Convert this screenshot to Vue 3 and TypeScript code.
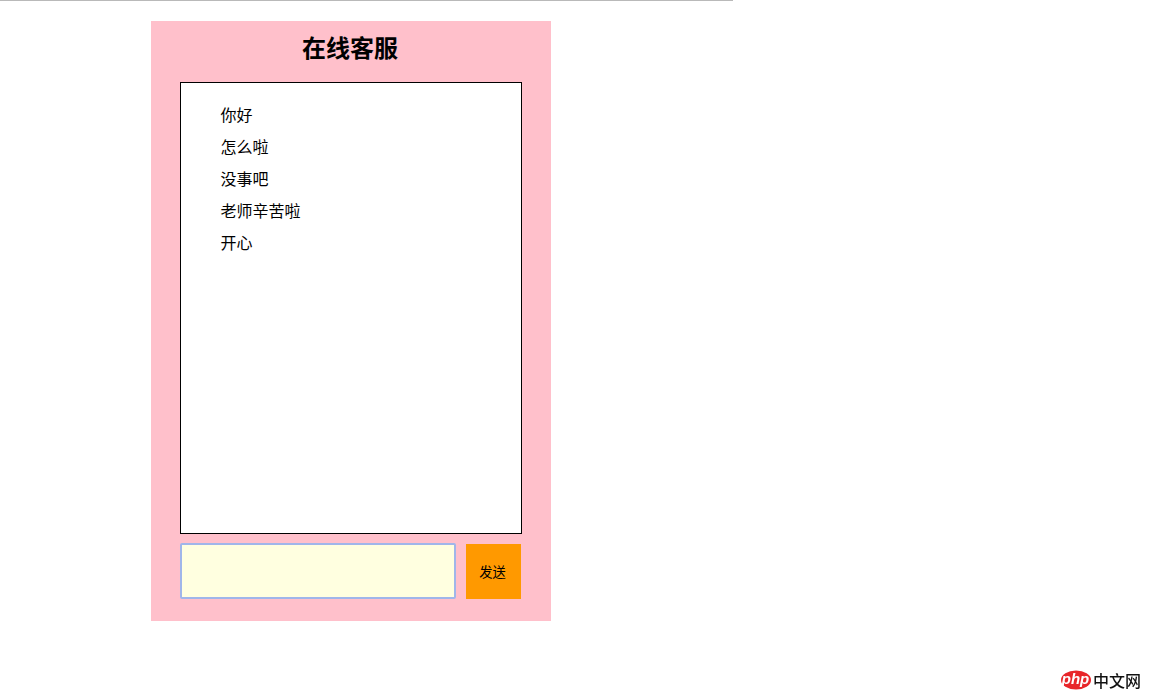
<script setup lang="ts">
const messages: string[] = ['你好', '怎么啦', '没事吧', '老师辛苦啦', '开心']
</script>

<template>
  <div class="page">
    <div class="rule"></div>
    <main class="panel">
      <h2 class="title">在线客服</h2>
      <div class="chat">
        <ul class="list">
          <li v-for="m in messages" :key="m">{{ m }}</li>
        </ul>
      </div>
      <div class="composer">
        <textarea class="field"></textarea>
        <button class="send" type="button">发送</button>
      </div>
    </main>
    <div class="logo">
      <svg class="php" width="30" height="20" viewBox="0 0 30 20">
        <ellipse cx="15" cy="10" rx="15" ry="9.5" fill="#e8262a" />
        <text x="14.5" y="14" text-anchor="middle" class="php-text">php</text>
      </svg>
      <span class="cn">中文网</span>
    </div>
  </div>
</template>

<style scoped>
.page {
  font-family: "Noto Sans CJK SC", "Liberation Sans", sans-serif;
  color: #000;
}
.rule {
  width: 733px;
  height: 1px;
  background: #b9b9b9;
}
.panel {
  box-sizing: border-box;
  width: 400px;
  height: 600px;
  margin: 20px 0 0 151px;
  padding: 0 29px;
  background: #ffc0cb;
}
.title {
  margin: 0;
  height: 61px;
  padding-right: 2px;
  font-size: 24px;
  font-weight: 700;
  line-height: 52px;
  text-align: center;
}
.chat {
  box-sizing: border-box;
  width: 342px;
  height: 452px;
  border: 1px solid #000;
  background: #fff;
}
.list {
  margin: 0;
  padding: 15px 0 0 39.5px;
  list-style: none;
  font-size: 16px;
  line-height: 32px;
}
.composer {
  display: flex;
  align-items: flex-end;
  gap: 10px;
  margin-top: 9px;
}
.field {
  display: block;
  box-sizing: border-box;
  width: 276px;
  height: 56px;
  margin: 0;
  padding: 2px;
  border: 2px solid #a0b6ea;
  border-radius: 2px;
  outline: none;
  resize: none;
  background: #ffffe0;
}
.send {
  width: 55px;
  height: 55px;
  padding: 0 2px 0 0;
  border: none;
  background: #ff9900;
  color: #000;
  font-family: inherit;
  font-size: 13.33px;
}
.logo {
  position: fixed;
  left: 1061px;
  top: 670px;
  display: flex;
  align-items: center;
  gap: 2px;
  height: 20px;
}
.php {
  display: block;
}
.php-text {
  fill: #fff;
  font-family: "Liberation Sans", sans-serif;
  font-size: 15px;
  font-style: italic;
  font-weight: 700;
}
.cn {
  font-size: 16px;
  line-height: 20px;
  font-weight: 500;
  color: #111;
  white-space: nowrap;
}
</style>
